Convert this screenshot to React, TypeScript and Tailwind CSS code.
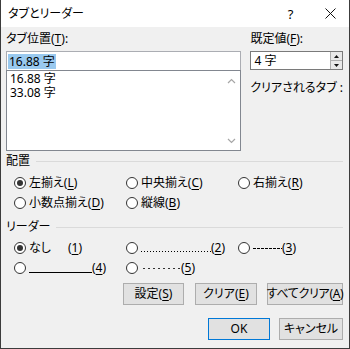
import React from "react";

function Radio({ checked }: { checked?: boolean }) {
  return (
    <span className="w-[12px] h-[12px] rounded-full border border-[#333333] bg-white flex items-center justify-center shrink-0">
      {checked && <span className="w-[6px] h-[6px] rounded-full bg-[#333333]" />}
    </span>
  );
}

function U({ children }: { children: React.ReactNode }) {
  return <span className="underline underline-offset-[2px] decoration-1">{children}</span>;
}

function Btn({ children, w, primary }: { children: React.ReactNode; w: string; primary?: boolean }) {
  return (
    <div
      className={
        w +
        " h-[22px] flex items-center justify-center whitespace-nowrap bg-[#e1e1e1] border " +
        (primary ? "border-[#0078d7]" : "border-[#adadad]")
      }
    >
      {children}
    </div>
  );
}

function Chevron({ up }: { up?: boolean }) {
  return (
    <svg width="9" height="6" viewBox="0 0 9 6" fill="none">
      <path d={up ? "M1 5L4.5 1.5L8 5" : "M1 1L4.5 4.5L8 1"} stroke="#a6a6a6" strokeWidth="1.2" />
    </svg>
  );
}

export default function App() {
  return (
    <div className="w-[350px] h-[349px] flex flex-col border-x border-b border-[#3c3c3c] bg-[#f0f0f0] text-[12px] leading-[14px] text-black font-['Noto_Sans','Noto_Sans_CJK_JP',sans-serif] [font-feature-settings:'palt']">
      {/* Title bar */}
      <div className="h-[27px] bg-white flex items-center pl-[7px] shrink-0">
        <span>タブとリーダー</span>
        <div className="ml-auto w-[38px] h-full flex items-center justify-center text-[13px] pr-[3px]">?</div>
        <div className="w-[38px] h-full flex items-center justify-center">
          <svg width="11" height="11" viewBox="0 0 11 11">
            <path d="M0.5 0.5L10.5 10.5M10.5 0.5L0.5 10.5" stroke="#111" strokeWidth="1" />
          </svg>
        </div>
      </div>

      <div className="flex-1 flex flex-col pl-[5px] pr-[6px] pt-[5px]">
        {/* Tab positions */}
        <div className="flex">
          <div className="w-[257px] flex flex-col">
            <div className="h-[14px] mb-[5px]">
              タブ位置(<U>T</U>):
            </div>
            <div className="h-[19px] bg-white border-x border-t border-[#abadb3] flex items-center pl-[1px]">
              <span className="bg-[#99c9ef] px-[1px] leading-[15px]">16.88 字</span>
            </div>
            <div className="h-[81px] bg-white border border-[#828790] flex">
              <div className="flex-1 pl-[3px] pt-[1px] leading-[14px]">
                <div>16.88 字</div>
                <div>33.08 字</div>
              </div>
              <div className="w-[17px] flex flex-col items-center justify-between pt-[7px] pb-[6px]">
                <Chevron up />
                <Chevron />
              </div>
            </div>
          </div>
          <div className="ml-[9px] flex-1 flex flex-col">
            <div className="h-[14px] mb-[5px]">
              既定値(<U>F</U>):
            </div>
            <div className="h-[19px] bg-white border border-[#7a7a7a] flex items-center">
              <span className="pl-[3px] flex-1">4 字</span>
              <div className="w-[12px] h-full flex flex-col border-l border-[#adadad]">
                <div className="flex-1 bg-[#e8e8e8] border-b border-[#adadad] flex items-center justify-center">
                  <svg width="5" height="3" viewBox="0 0 5 3"><path d="M2.5 0L5 3H0Z" fill="#111" /></svg>
                </div>
                <div className="flex-1 bg-[#e8e8e8] flex items-center justify-center">
                  <svg width="5" height="3" viewBox="0 0 5 3"><path d="M0 0H5L2.5 3Z" fill="#111" /></svg>
                </div>
              </div>
            </div>
            <div className="mt-[11px] whitespace-nowrap">クリアされるタブ :</div>
          </div>
        </div>

        {/* Alignment */}
        <div className="mt-[3px] h-[14px] flex items-center">
          <span>配置</span>
          <span className="ml-[6px] flex-1 h-px bg-[#dadada]" />
        </div>
        <div className="mt-[5px] pl-[8px] grid grid-cols-[112px_112px_1fr]">
          <div className="h-[20px] flex items-center gap-[3px]">
            <Radio checked />
            <span>左揃え(<U>L</U>)</span>
          </div>
          <div className="h-[20px] flex items-center gap-[3px]">
            <Radio />
            <span>中央揃え(<U>C</U>)</span>
          </div>
          <div className="h-[20px] flex items-center gap-[3px]">
            <Radio />
            <span>右揃え(<U>R</U>)</span>
          </div>
          <div className="h-[20px] flex items-center gap-[3px]">
            <Radio />
            <span>小数点揃え(<U>D</U>)</span>
          </div>
          <div className="h-[20px] flex items-center gap-[3px]">
            <Radio />
            <span>縦線(<U>B</U>)</span>
          </div>
        </div>

        {/* Leader */}
        <div className="mt-[7px] h-[14px] flex items-center">
          <span>リーダー</span>
          <span className="ml-[6px] flex-1 h-px bg-[#dadada]" />
        </div>
        <div className="mt-[4px] pl-[8px] grid grid-cols-[112px_112px_1fr]">
          <div className="h-[20px] flex items-center gap-[3px]">
            <Radio checked />
            <span className="w-[36px]">なし</span>
            <span>(<U>1</U>)</span>
          </div>
          <div className="h-[20px] flex items-center gap-[3px]">
            <Radio />
            <span className="flex items-end">
              <span className="w-[70px] h-px mb-[3px] bg-[repeating-linear-gradient(to_right,#000_0_1px,transparent_1px_3px)]" />
              <span>(<U>2</U>)</span>
            </span>
          </div>
          <div className="h-[20px] flex items-center gap-[3px]">
            <Radio />
            <span className="flex items-center">
              <span className="w-[29px] h-px mt-[1px] bg-[repeating-linear-gradient(to_right,#000_0_3px,transparent_3px_4px)]" />
              <span>(<U>3</U>)</span>
            </span>
          </div>
          <div className="h-[20px] flex items-center gap-[3px]">
            <Radio />
            <span className="flex items-end">
              <span className="w-[63px] h-px mb-[2px] bg-black" />
              <span>(<U>4</U>)</span>
            </span>
          </div>
          <div className="h-[20px] flex items-center gap-[3px]">
            <Radio />
            <span className="flex items-center">
              <span className="w-[40px] h-px mt-[1px] bg-[repeating-linear-gradient(to_right,transparent_0_2px,#333_2px_4px,transparent_4px_5px)]" />
              <span>(<U>5</U>)</span>
            </span>
          </div>
        </div>

        {/* Buttons */}
        <div className="mt-[5px] flex justify-end gap-[11px]">
          <Btn w="w-[61px]">
            設定(<U>S</U>)
          </Btn>
          <div className="flex gap-[10px]">
            <Btn w="w-[62px]">
              クリア(<U>E</U>)
            </Btn>
            <Btn w="w-[76px]">
              <span className="tracking-[-0.3px]">
                すべてクリア(<U>A</U>)
              </span>
            </Btn>
          </div>
        </div>
        <div className="mt-[13px] flex justify-end gap-[9px]">
          <Btn w="w-[62px]" primary>
            OK
          </Btn>
          <Btn w="w-[64px]">キャンセル</Btn>
        </div>
      </div>
    </div>
  );
}
